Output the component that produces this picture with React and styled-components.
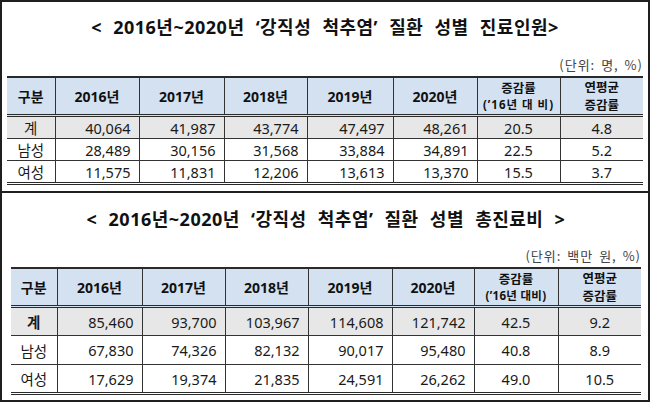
import React from "react";
import styled, { createGlobalStyle } from "styled-components";

const GlobalStyle = createGlobalStyle`
  html, body {
    margin: 0;
    padding: 0;
    background: #ffffff;
  }
  body {
    font-family: "Noto Sans", "Noto Sans CJK KR", sans-serif;
    color: #1a1a1a;
  }
`;

const Page = styled.div`
  width: 650px;
  height: 404px;
  box-sizing: border-box;
  display: flex;
  flex-direction: column;
`;

const Panel = styled.section`
  box-sizing: border-box;
  height: ${(p) => p.$height}px;
  border: 2px solid #1f1f1f;
  padding: ${(p) => p.$pad};
  display: flex;
  flex-direction: column;
  & + & {
    border-top: none;
  }
`;

const Title = styled.h2`
  margin: 0;
  font-size: 18px;
  line-height: 24px;
  font-weight: 700;
  text-align: center;
  letter-spacing: 0.5px;
  word-spacing: 6px;
  color: #111;
`;

const Unit = styled.div`
  margin-top: ${(p) => p.$gap}px;
  font-size: 13px;
  line-height: 16px;
  text-align: right;
  color: #444;
  font-family: "Noto Sans CJK KR", sans-serif;
  letter-spacing: 1px;
  word-spacing: 2px;
`;

const Table = styled.table`
  margin-top: 3px;
  width: 100%;
  table-layout: fixed;
  border-collapse: collapse;
  border-top: 2px solid #2a2a2a;
  border-bottom: 3px double #2a2a2a;
`;

const HeadRow = styled.tr`
  height: ${(p) => p.$height}px;
  background: #d3e1f1;
  border-bottom: 3px double #2a2a2a;
`;

const Row = styled.tr`
  height: ${(p) => p.$height}px;
  background: ${(p) => (p.$shaded ? "#e7e7e7" : "#ffffff")};
  & + & {
    border-top: 1px solid #333;
  }
`;

const Th = styled.th`
  padding: 0;
  font-size: 14px;
  font-weight: 700;
  text-align: center;
  vertical-align: middle;
  color: #111;
  line-height: 17px;
  & + & {
    border-left: 1px solid #333;
  }
`;

const HeadLine = styled.span`
  display: block;
  font-size: 12.5px;
  line-height: 18px;
  font-family: "Noto Sans CJK KR", sans-serif;
`;

const SubLabel = styled.span`
  display: block;
  font-size: 11.5px;
  line-height: 16px;
  letter-spacing: ${(p) => p.$spacing}px;
`;

const Td = styled.td`
  padding: 0 ${(p) => (p.$align === "right" ? "8px" : "0")} 0 0;
  font-size: 14.5px;
  text-align: ${(p) => p.$align || "center"};
  vertical-align: middle;
  font-weight: ${(p) => (p.$bold ? 700 : 400)};
  color: #1a1a1a;
  & + & {
    border-left: 1px solid #333;
  }
`;

const tables = [
  {
    title: "< 2016년~2020년 ‘강직성 척추염’ 질환 성별 진료인원>",
    unit: "(단위: 명, %)",
    widths: [48, 84, 85, 83, 86, 84, 83, 83],
    height: 193,
    pad: "13px 5px 11px 5px",
    unitGap: 18,
    headHeight: 36,
    rowHeight: 22,
    boldTotal: false,
    sub: "(’16년 대 비)",
    subSpacing: 1,
    rows: [
      ["계", "40,064", "41,987", "43,774", "47,497", "48,261", "20.5", "4.8"],
      ["남성", "28,489", "30,156", "31,568", "33,884", "34,891", "22.5", "5.2"],
      ["여성", "11,575", "11,831", "12,206", "13,613", "13,370", "15.5", "3.7"],
    ],
  },
  {
    title: "< 2016년~2020년 ‘강직성 척추염’ 질환 성별 총진료비 >",
    unit: "(단위: 백만 원, %)",
    widths: [46, 85, 83, 83, 84, 82, 84, 83],
    height: 209,
    pad: "14px 7px 5px 9px",
    unitGap: 17,
    headHeight: 35,
    rowHeight: 29,
    boldTotal: true,
    sub: "(’16년 대비)",
    subSpacing: 0.3,
    rows: [
      ["계", "85,460", "93,700", "103,967", "114,608", "121,742", "42.5", "9.2"],
      ["남성", "67,830", "74,326", "82,132", "90,017", "95,480", "40.8", "8.9"],
      ["여성", "17,629", "19,374", "21,835", "24,591", "26,262", "49.0", "10.5"],
    ],
  },
];

const years = ["2016년", "2017년", "2018년", "2019년", "2020년"];

function StatTable({ data }) {
  return (
    <Panel $height={data.height} $pad={data.pad}>
      <Title>{data.title}</Title>
      <Unit $gap={data.unitGap}>{data.unit}</Unit>
      <Table>
        <colgroup>
          {data.widths.map((w, i) => (
            <col key={i} style={{ width: w }} />
          ))}
        </colgroup>
        <thead>
          <HeadRow $height={data.headHeight}>
            <Th>구분</Th>
            {years.map((y) => (
              <Th key={y}>{y}</Th>
            ))}
            <Th>
              <HeadLine>증감률</HeadLine>
              <SubLabel $spacing={data.subSpacing}>{data.sub}</SubLabel>
            </Th>
            <Th>
              <HeadLine>연평균</HeadLine>
              <HeadLine>증감률</HeadLine>
            </Th>
          </HeadRow>
        </thead>
        <tbody>
          {data.rows.map((r, i) => (
            <Row key={r[0]} $height={data.rowHeight} $shaded={i === 0}>
              <Td $bold={i === 0 && data.boldTotal}>{r[0]}</Td>
              {r.slice(1, 6).map((v, j) => (
                <Td key={j} $align="right">
                  {v}
                </Td>
              ))}
              <Td>{r[6]}</Td>
              <Td>{r[7]}</Td>
            </Row>
          ))}
        </tbody>
      </Table>
    </Panel>
  );
}

export default function App() {
  return (
    <>
      <GlobalStyle />
      <Page>
        {tables.map((t) => (
          <StatTable key={t.unit} data={t} />
        ))}
      </Page>
    </>
  );
}
